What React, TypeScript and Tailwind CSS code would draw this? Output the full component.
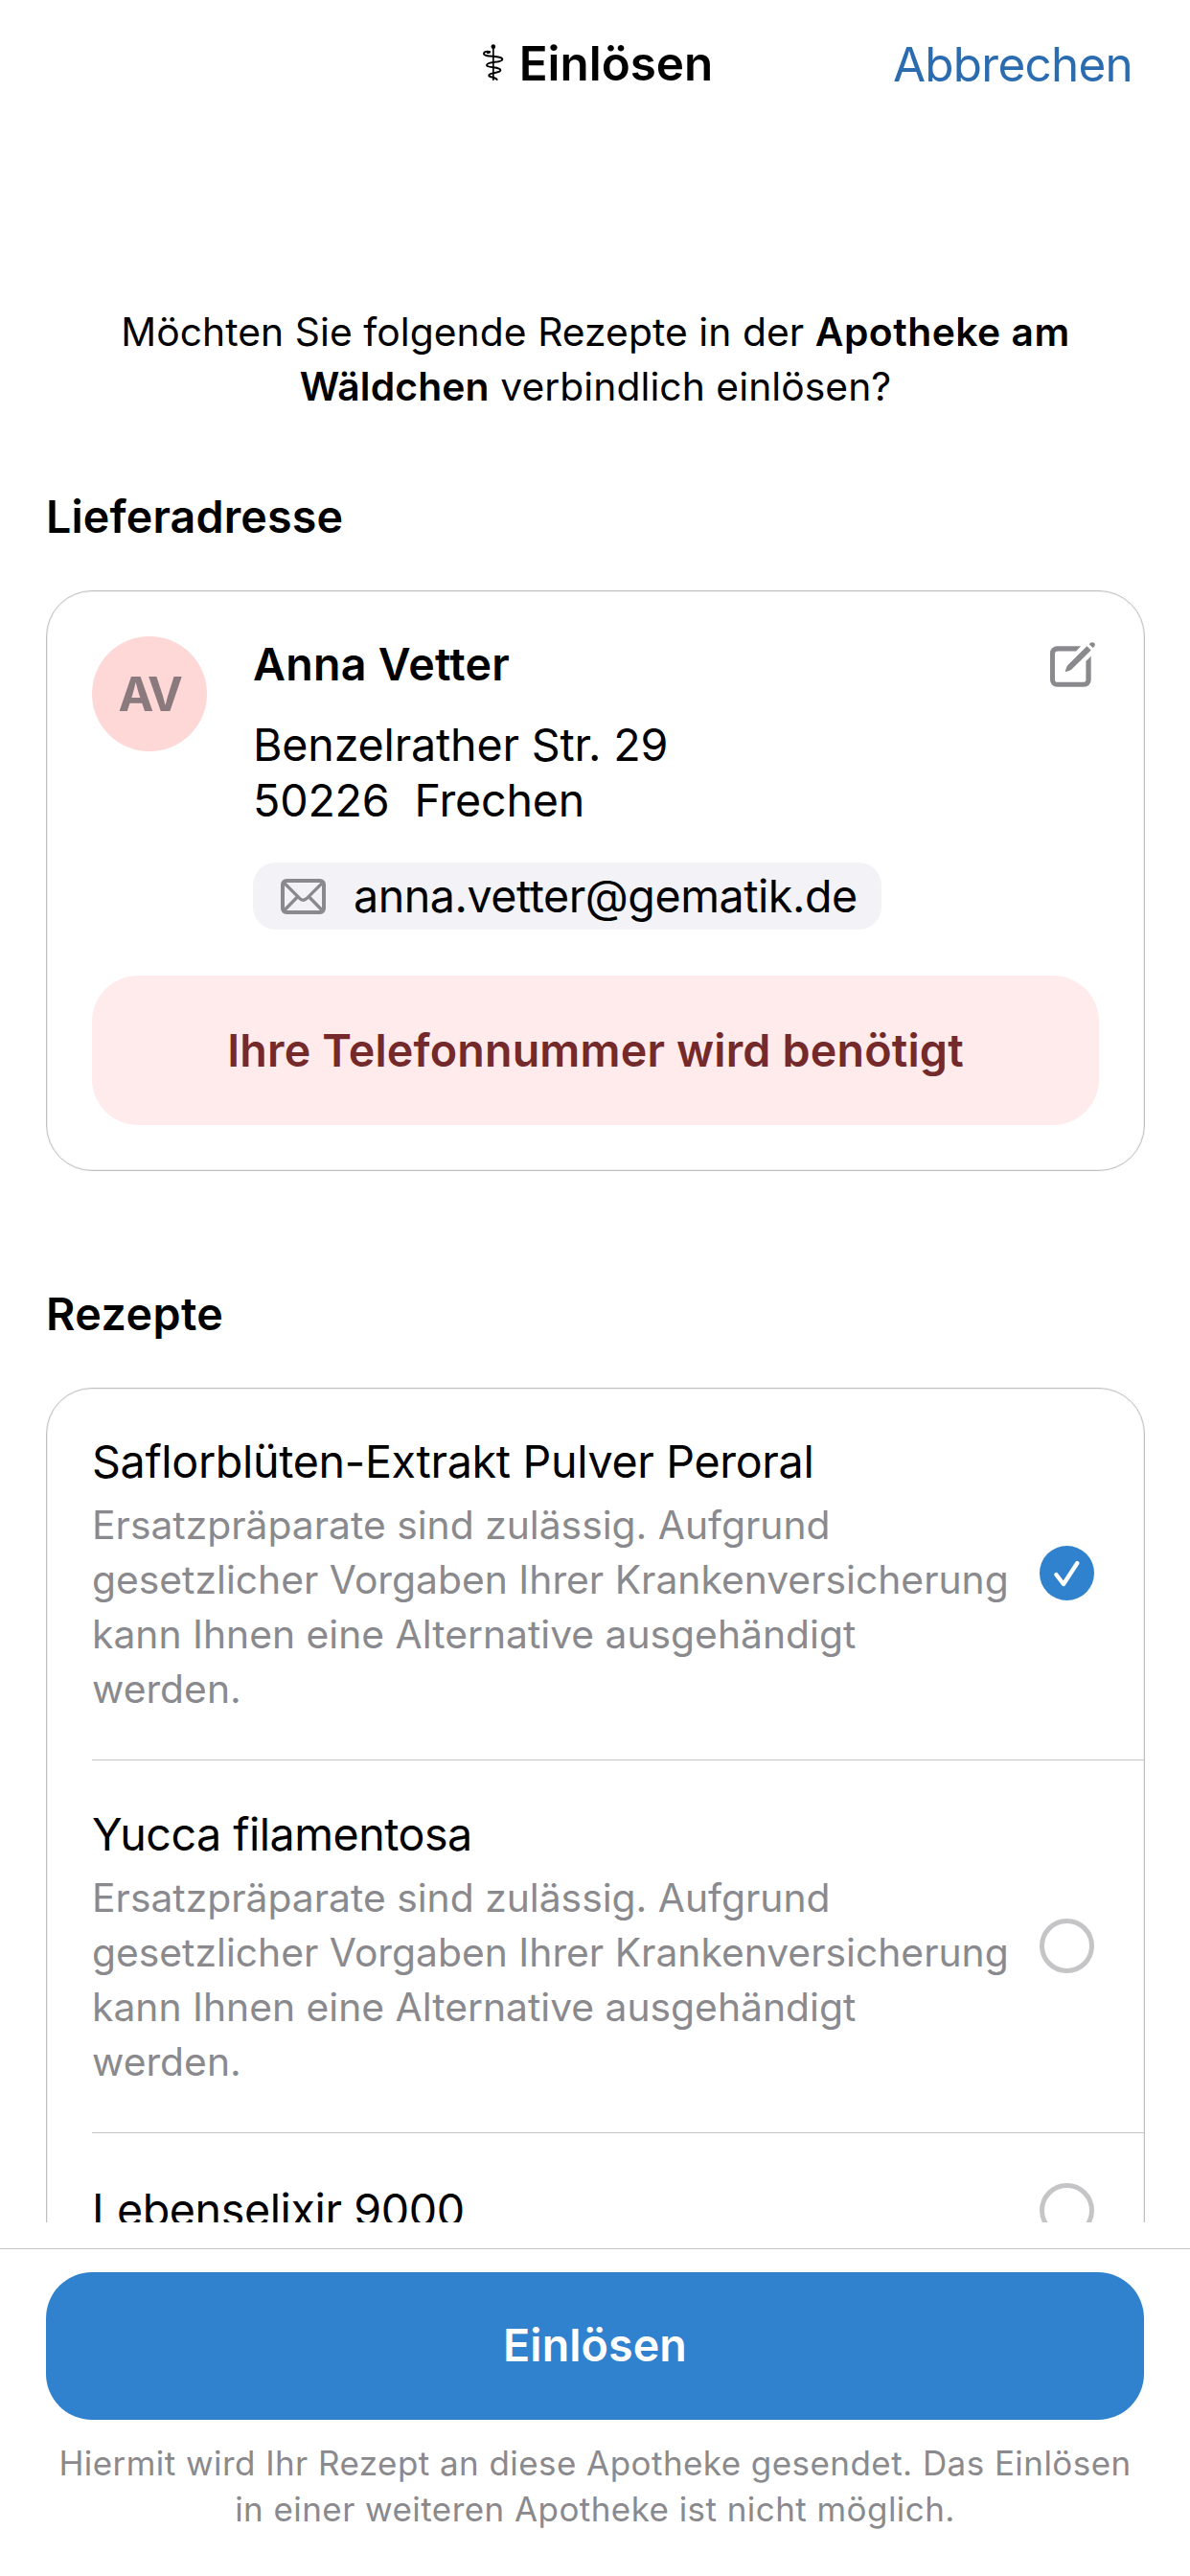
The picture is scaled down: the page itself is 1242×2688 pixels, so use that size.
import { Fragment } from 'react';

function StaffIcon() {
  return (
    <svg className="h-[38px] w-[22px] shrink-0" viewBox="41 33 66 114" fill="none" stroke="#000" strokeLinecap="round">
      <circle cx="73.5" cy="41" r="7" fill="#000" stroke="none" />
      <path strokeWidth="5" d="M73.5 40V145" />
      <path
        strokeWidth="6"
        d="M61 57C54 55 44 56 44 63C44 76 102 67 102 81C102 92 53 87 53 99C53 109 96 103 96 115C96 125 60 121 60 131C60 138 79 134 85 144"
      />
      <path strokeWidth="8" d="M56 59L61 58" />
    </svg>
  );
}

function EditIcon() {
  return (
    <svg className="mt-1.5 mr-1 h-[47px] w-[47px] shrink-0" viewBox="168 210 142 141" fill="#8a8a8e">
      <path d="M265 222H190a22 22 0 0 0-22 22v85a22 22 0 0 0 22 22h85a22 22 0 0 0 22-22V254l-16 16v57a9 9 0 0 1-9 9h-80a9 9 0 0 1-9-9v-80a9 9 0 0 1 9-9h58z" />
      <path d="M284 222L297 235L235 296Q230 300 217 303Q215 303 216 300Q219 288 223 283Z" />
      <path d="M291 216l4-4q7-4 12 0q5 6 0 12l-4 4z" />
    </svg>
  );
}

function MailIcon() {
  return (
    <svg className="h-[37px] w-[47px] shrink-0" viewBox="0 0 141 111" fill="none" stroke="#8a8a8e">
      <rect x="6" y="6" width="129" height="99" rx="12" strokeWidth="12" />
      <path strokeWidth="10" d="M11 13L59 61Q70 72 82 61L130 13M11 99L52 57M130 99L89 57" />
    </svg>
  );
}

function Check({ checked, className }: { checked: boolean; className: string }) {
  return (
    <span className={`mr-[52px] ml-auto h-[57px] w-[57px] shrink-0 rounded-full ${checked ? 'bg-[#3182ce]' : 'border-5 border-[#c5c5c7]'} ${className}`}>
      {checked && (
        <svg className="h-full w-full" viewBox="0 0 171 171" fill="none" stroke="#fff" strokeWidth="13" strokeLinecap="round" strokeLinejoin="round">
          <path d="M52 90L75 120L118 54" />
        </svg>
      )}
    </span>
  );
}

function Lines({ lines }: { lines: string[] }) {
  return (
    <>
      {lines.map((line, i) => (
        <Fragment key={line}>
          {i > 0 && <br />}
          {line}
        </Fragment>
      ))}
    </>
  );
}

const substitutionNote = [
  'Ersatzpräparate sind zulässig. Aufgrund',
  'gesetzlicher Vorgaben Ihrer Krankenversicherung',
  'kann Ihnen eine Alternative ausgehändigt',
  'werden.',
];

const prescriptions = [
  { name: 'Saflorblüten-Extrakt Pulver Peroral', note: substitutionNote, checked: true, tracking: 'tracking-[-0.32px]' },
  { name: 'Yucca filamentosa', note: substitutionNote, checked: false, tracking: 'tracking-[-0.5px]' },
  { name: 'Lebenselixir 9000', note: null, checked: false, tracking: 'tracking-[-0.4px]' },
];

function SectionTitle({ children, className }: { children: string; className: string }) {
  return <h2 className={`text-[46.6px] leading-[56px] font-semibold ${className}`}>{children}</h2>;
}

export default function App() {
  return (
    <div className="flex h-[2688px] w-[1242px] flex-col overflow-hidden bg-white font-['Inter',sans-serif] whitespace-nowrap text-black">
      <div className="h-[2319px] shrink-0 overflow-hidden">
        <header className="grid h-[318px] grid-cols-[1fr_auto_1fr] items-start pt-9 text-[49.4px] leading-[60px]">
          <h1 className="col-start-2 flex items-start gap-4 pl-1.5 font-semibold">
            <span className="flex pt-2.5">
              <StaffIcon />
            </span>
            Einlösen
          </h1>
          <button className="mt-px justify-self-end pr-[60px] tracking-[-0.72px] text-[#2b6cb0]">Abbrechen</button>
        </header>

        <main className="mr-[47px] ml-12">
          <p className="text-center text-[40.8px] leading-[57px] tracking-[0.05px]">
            Möchten Sie folgende Rezepte in der <b className="font-semibold tracking-[0.5px]">Apotheke am</b>
            <br />
            <b className="font-semibold tracking-[0.15px]">Wäldchen</b> verbindlich einlösen?
          </p>

          <SectionTitle className="mt-[79px] tracking-[0.15px]">Lieferadresse</SectionTitle>
          <section className="mt-[49px] rounded-[48px] border border-[#c0c0c2] p-[47px] text-[46.6px] leading-[58px] shadow-[inset_0_0_0_1px_#f0f0f0]">
            <div className="flex items-start">
              <div className="flex h-[120px] w-[120px] items-center justify-center rounded-full bg-[#fed7d7] text-[49.4px] font-bold tracking-[-2.3px] text-[#8a7a7e]">
                AV
              </div>
              <div className="ml-12 flex-1">
                <h3 className="font-semibold tracking-[0.26px]">Anna Vetter</h3>
                <p className="mt-[26px] tracking-[-0.17px]">
                  Benzelrather Str. 29
                  <br />
                  50226&nbsp;&nbsp;Frechen
                </p>
                <div className="mt-9 flex h-[70px] w-[656px] items-center gap-[29px] rounded-3xl bg-[#f2f2f7] pl-[29px] tracking-[-0.46px]">
                  <MailIcon />
                  anna.vetter@gematik.de
                </div>
              </div>
              <EditIcon />
            </div>
            <button className="mt-12 flex h-[156px] w-full items-center justify-center rounded-[48px] bg-[#ffebeb] font-semibold tracking-[0.19px] text-[#742a2a]">
              Ihre Telefonnummer wird benötigt
            </button>
          </section>

          <SectionTitle className="mt-[121px] tracking-[0.45px]">Rezepte</SectionTitle>
          <ul className="mt-[49px] rounded-[48px] border border-[#c0c0c2] pl-[47px] shadow-[inset_0_0_0_1px_#f0f0f0]">
            {prescriptions.map(({ name, note, checked, tracking }, i) => (
              <li
                key={name}
                className={`flex items-center pb-[45px] ${i === 0 ? 'pt-[47px]' : 'border-t border-[#c6c6c8]'} ${i === 1 ? 'pt-12' : ''} ${i === 2 ? 'pt-[51px]' : ''}`}
              >
                <div>
                  <h3 className={`text-[46.6px] leading-[58px] ${tracking}`}>{name}</h3>
                  {note && (
                    <p className="mt-[9px] text-[40.8px] leading-[57px] text-[#8a8a8e]">
                      <Lines lines={note} />
                    </p>
                  )}
                </div>
                <Check checked={checked} className={note ? '-mt-1' : 'mt-px'} />
              </li>
            ))}
            <li className="h-24" />
          </ul>
        </main>
      </div>

      <footer className="mt-[27px] border-t border-[#c6c6c8] px-12 pt-6">
        <button className="flex h-[154px] w-full items-center justify-center rounded-[48px] bg-[#3182ce] text-[46.6px] font-semibold tracking-[0.1px] text-white">
          Einlösen
        </button>
        <p className="mt-[21px] text-center text-[35px] leading-[48px] tracking-[0.44px] text-[#8a8a8e]">
          <Lines lines={['Hiermit wird Ihr Rezept an diese Apotheke gesendet. Das Einlösen', 'in einer weiteren Apotheke ist nicht möglich.']} />
        </p>
      </footer>
    </div>
  );
}
